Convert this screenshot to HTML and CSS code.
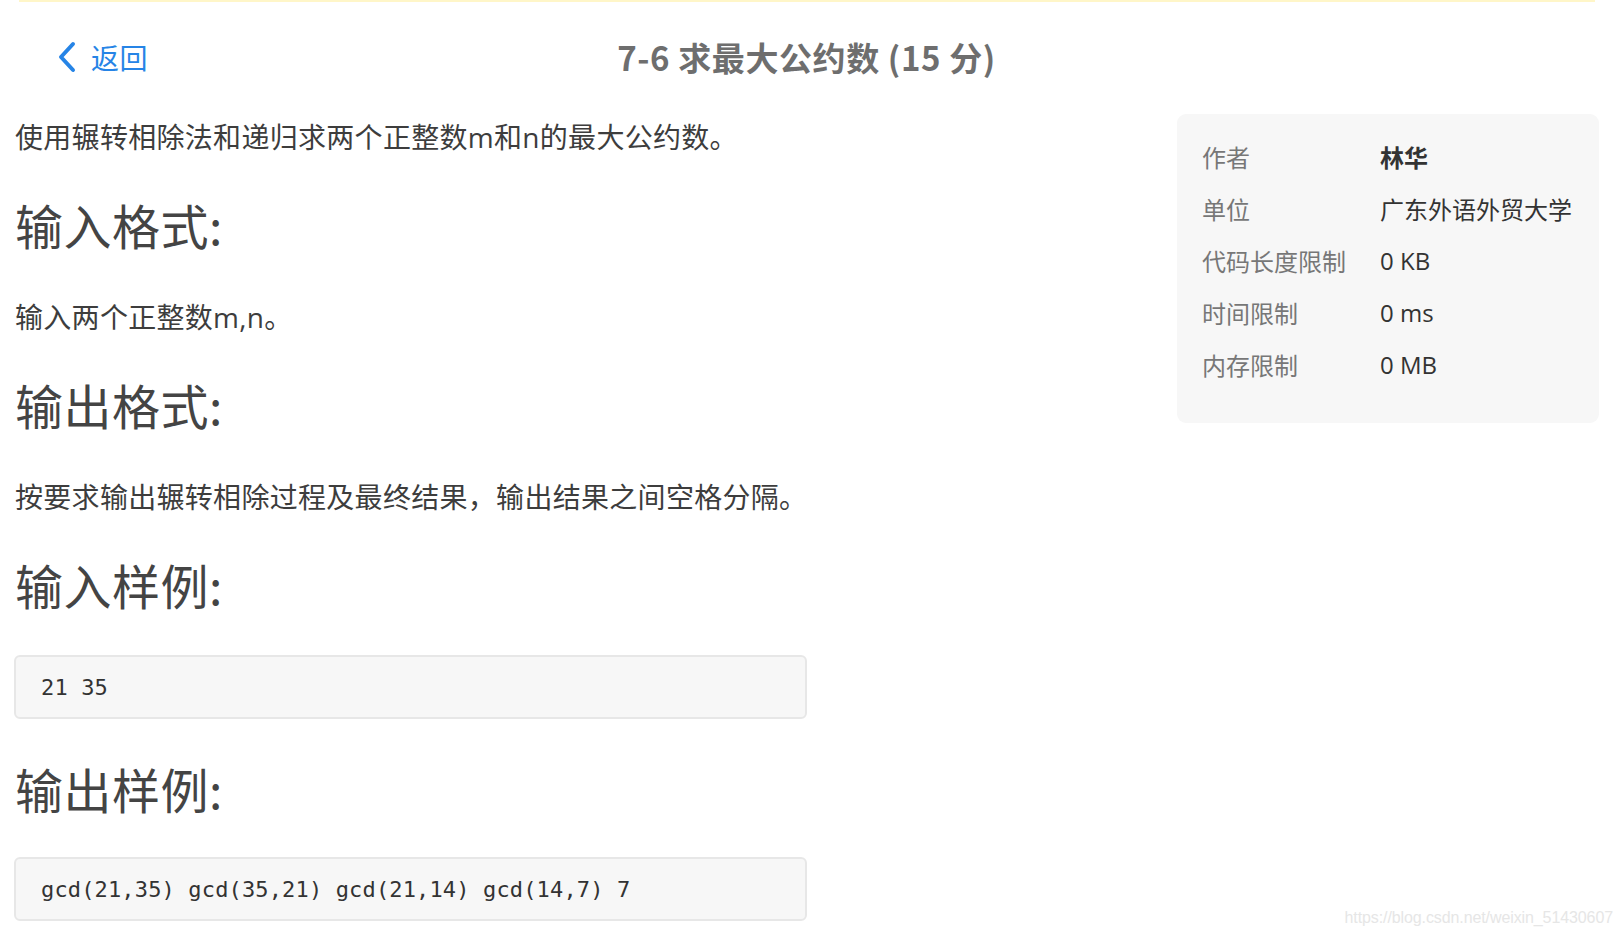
FILE: index.html
```html
<!DOCTYPE html>
<html lang="zh-CN">
<head>
<meta charset="utf-8">
<title>7-6 求最大公约数</title>
<link rel="stylesheet" href="styles.css">
</head>
<body>
<div class="topline"></div>
<header class="header">
  <div class="back">
    <svg class="chev" width="20" height="32" viewBox="0 0 20 32"><polyline points="15,3 3,16 15,29" fill="none" stroke="#2684e6" stroke-width="4" stroke-linecap="round" stroke-linejoin="round"/></svg>
    <span class="back-text">返回</span>
  </div>
  <h1 class="title">7-6 求最大公约数 (15 分)</h1>
  <div class="spacer"></div>
</header>
<main class="main">
  <section class="content">
    <p class="para first">使用辗转相除法和递归求两个正整数m和n的最大公约数。</p>
    <h2 class="sec">输入格式:</h2>
    <p class="para">输入两个正整数m,n。</p>
    <h2 class="sec">输出格式:</h2>
    <p class="para">按要求输出辗转相除过程及最终结果，输出结果之间空格分隔。</p>
    <h2 class="sec">输入样例:</h2>
    <pre class="code first-code">21 35</pre>
    <h2 class="sec">输出样例:</h2>
    <pre class="code">gcd(21,35) gcd(35,21) gcd(21,14) gcd(14,7) 7</pre>
  </section>
  <aside class="info">
    <div class="row"><span class="label">作者</span><span class="value bold">林华</span></div>
    <div class="row"><span class="label">单位</span><span class="value">广东外语外贸大学</span></div>
    <div class="row"><span class="label">代码长度限制</span><span class="value">0 KB</span></div>
    <div class="row"><span class="label">时间限制</span><span class="value">0 ms</span></div>
    <div class="row"><span class="label">内存限制</span><span class="value">0 MB</span></div>
  </aside>
</main>
<div class="watermark">https://blog.csdn.net/weixin_51430607</div>
</body>
</html>
```
FILE: styles.css
```css
html, body {
  margin: 0;
  padding: 0;
  background: #ffffff;
}
body {
  font-family: "Open Sans", "Noto Sans CJK SC", sans-serif;
  color: #3d3d3d;
  width: 1623px;
  height: 937px;
  overflow: hidden;
  position: relative;
}
.topline {
  height: 2px;
  background: #fff6c8;
  margin: 0 28px 0 19px;
}
.header {
  height: 110px;
  display: grid;
  grid-template-columns: 1fr auto 1fr;
  align-items: center;
  padding-right: 10px;
}
.back {
  display: flex;
  align-items: center;
  padding-left: 58px;
  gap: 13px;
  color: #2684e6;
}
.chev {
  display: block;
}
.back-text {
  font-family: "Noto Sans CJK SC", sans-serif;
  font-size: 28px;
  line-height: 32px;
  letter-spacing: 0.5px;
}
.title {
  margin: 0;
  font-family: "Noto Sans CJK SC", sans-serif;
  font-weight: 700;
  font-size: 33px;
  line-height: 40px;
  letter-spacing: 0.6px;
  color: #6e6e6e;
}
.main {
  display: flex;
  align-items: flex-start;
}
.content {
  width: 793px;
  margin-left: 14px;
  display: flex;
  flex-direction: column;
  gap: 40px;
}
.para {
  margin: 0;
  font-size: 28px;
  line-height: 36px;
  padding-top: 6px;
  padding-left: 1px;
  letter-spacing: 0.3px;
  white-space: nowrap;
}
.para.first {
  margin-top: 1px;
}
.sec {
  margin: 0;
  font-family: "Noto Sans CJK SC", sans-serif;
  font-weight: 400;
  font-size: 48px;
  line-height: 58px;
  color: #444444;
  padding-left: 1px;
  letter-spacing: 0.5px;
}
.code {
  margin: 0;
  height: 60px;
  border: 2px solid #e7e7e7;
  border-radius: 6px;
  background: #f7f7f7;
  font-family: "DejaVu Sans Mono", monospace;
  font-size: 22px;
  line-height: 62px;
  padding: 0 24px 0 25px;
  letter-spacing: 0.15px;
  color: #333333;
}
.first-code {
  margin-top: 2px;
}
.info {
  margin-left: auto;
  margin-right: 24px;
  margin-top: 2px;
  width: 397px;
  height: 293px;
  padding: 16px 0 0 25px;
  background: #f7f7f7;
  border-radius: 9px;
}
.row {
  display: flex;
  height: 52px;
  align-items: center;
  font-size: 24px;
}
.label {
  width: 178px;
  color: #777777;
}
.value {
  color: #333333;
}
.bold {
  font-weight: 700;
}
.watermark {
  position: absolute;
  right: 10px;
  top: 907px;
  font-family: "Liberation Sans", Arial, sans-serif;
  font-size: 16px;
  line-height: 22px;
  letter-spacing: -0.1px;
  color: #e6e6e6;
}
```
